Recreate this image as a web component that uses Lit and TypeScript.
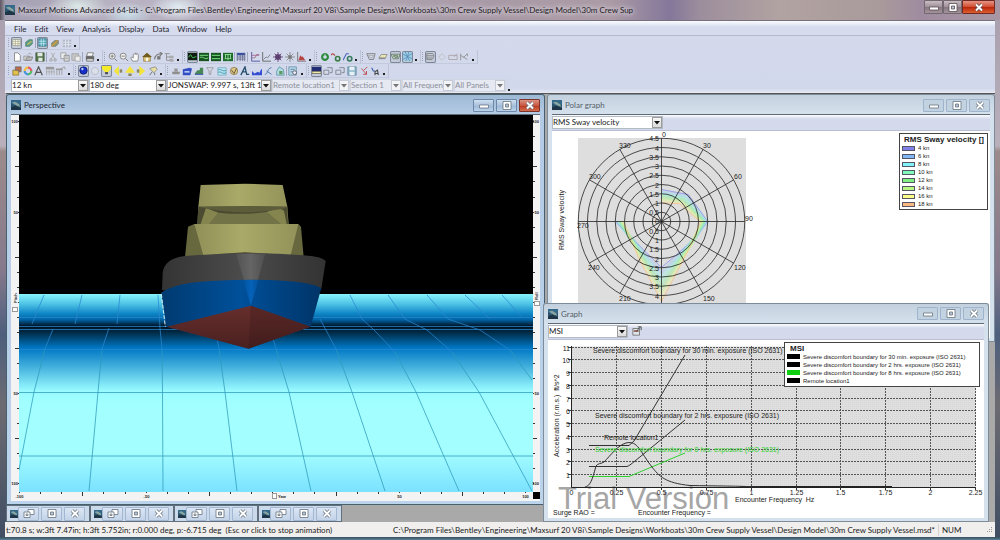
import { LitElement, html, svg, css, nothing, TemplateResult } from "lit";
import { customElement, property } from "lit/decorators.js";
import { classMap } from "lit/directives/class-map.js";
import { styleMap } from "lit/directives/style-map.js";

type Shape = ReturnType<typeof svg>;

const line = (d: string, c = "#555", w = 1): Shape =>
  svg`<path d=${d} fill="none" stroke=${c} stroke-width=${w}/>`;
const fill = (d: string, c: string, s = "none"): Shape =>
  svg`<path d=${d} fill=${c} stroke=${s} stroke-width=".8"/>`;
const ring = (x: number, y: number, r: number, c: string, s = "none", w = 1): Shape =>
  svg`<circle cx=${x} cy=${y} r=${r} fill=${c} stroke=${s} stroke-width=${w}/>`;

/* Toolbar glyphs on a 12 x 12 grid */
const ICONS: Record<string, Shape> = {
  sheet: svg`${fill("M1 2h10v8H1z", "#fffff0", "#8a8a70")}${line("M1 4.5h10M1 7.5h10M4.5 2v8M8 2v8", "#99997a", 0.8)}`,
  leaf: svg`${fill("M2 10V5l4-3h4v5L7 10z", "#5d9c83", "#4b7a6d")}${line("M4 8l5-4", "#d2c95a", 1.4)}`,
  teal: svg`${fill("M1 1h10v10H1z", "#4fa5b8", "#26667c")}${line("M1 4.3h10M1 7.6h10M4.3 1v10M7.6 1v10", "#d3f1f5", 0.9)}`,
  pencil: svg`${fill("M2 10V6l4-3h4v4L7 10z", "#8b9a72", "#6c6b66")}${line("M2 10l7-7", "#d09c3c", 1.6)}`,
  gridGrey: svg`${fill("M1 2h10v9H1z", "#b3b8c8")}${line("M1 5h10M1 8h10M4.3 2v9M7.6 2v9", "#e9ecf6", 1)}`,
  page: fill("M3 1h4l3 3v7H3z", "#fff", "#666"),
  open: svg`${fill("M1 5h7v5H1z", "#d5d5d2", "#888")}${fill("M3 10l2-4h7l-2 4z", "#bbb", "#777")}${line("M6 3l2-2 2 2", "#999")}`,
  save: svg`${fill("M1 1h10v10H1z", "#55754c", "#32482f")}${fill("M3 1h6v4H3zM4 7h5v4H4z", "#dfe8e0")}`,
  saveBlue: svg`${fill("M1 1h10v10H1z", "#8cb6cb", "#50788e")}${fill("M3 1h6v4H3zM3 7h6v4H3z", "#e8f2f6")}`,
  cut: svg`${line("M4 1l4 7M8 1L4 8", "#aaa")}${ring(3.5, 9.5, 1.5, "none", "#999")}${ring(8.5, 9.5, 1.5, "none", "#999")}`,
  copy: svg`${fill("M1 1h6v7H1z", "#ececec", "#888")}${fill("M5 4h6v7H5z", "#ddd", "#777")}${line("M6 6h4M6 8h4", "#999", 0.8)}`,
  paste: svg`${fill("M1 2h8v8H1z", "#c6c6c6", "#999")}${fill("M5 5h6v6H5z", "#eee", "#999")}`,
  print: svg`${fill("M3 1h7l-1 4H2z", "#fff", "#555")}${fill("M1 5h10v4H1z", "#666")}${fill("M2 8h8v3H2z", "#ddd", "#555")}`,
  zoomIn: svg`${ring(5, 5, 3.6, "#f3f3f3", "#777")}${line("M3 5h4M5 3v4M8 8l3 3", "#777", 1.1)}`,
  zoomOut: svg`${ring(5, 5, 3.6, "#f3f3f3", "#777")}${line("M3 5h4M8 8l3 3", "#777", 1.1)}`,
  hand: svg`${fill("M3 11L1 7l1-1 2 1V3l1-1 1 1 1-2 1 2 1-1 1 2v4L9 11z", "#f8f8f8", "#666")}`,
  home: svg`${fill("M2 6h8v5H2z", "#e7cf86", "#7d6726")}${fill("M0 6l6-5 6 5z", "#705b1c")}${fill("M5 7h2v4H5z", "#fff")}`,
  spin: svg`${line("M2 9c0-5 4-7 9-7M8 0l3 2-3 3", "#777", 1.3)}${fill("M5 5h4v4H5z", "#777")}`,
  tree: svg`${line("M1 2h6M3 2v8h4M3 6h4", "#888")}${fill("M7 5h4v2H7zM7 9h4v2H7z", "#bbb", "#999")}`,
  g1: svg`${fill("M0 1h12v10H0z", "#101c12")}${line("M1 7c2-4 3-4 4-1s3 1 6 0", "#45d65a", 1.3)}`,
  g2: svg`${fill("M0 1h12v10H0z", "#17531f")}${line("M1 4h10M1 7c3-3 6 3 10 0", "#79dd83", 1.2)}`,
  g3: svg`${fill("M0 1h12v10H0z", "#17531f")}${line("M1 4h10M1 8h10", "#79dd83", 1.2)}`,
  g4: svg`${fill("M0 1h12v10H0z", "#1d6929")}${line("M2 3h8M2 8h8M3 3v5M9 3v5M6 3v7", "#9de5a2", 1)}`,
  table: svg`${fill("M1 1h10v3H1z", "#384e9e")}${line("M1.5 1v10M5 3v8M8 3v8M10.5 1v10M1 6h10M1 8.5h10", "#62698c")}`,
  graph: svg`${line("M2 0v11h10", "#5d62a4", 1.2)}${line("M2 7h4l2-4h3M2 4h9", "#a06688", 1)}`,
  graph2: svg`${line("M2 0v11h10", "#666", 1.1)}${line("M3 9l3-3 2 1 3-4", "#777", 1)}`,
  star: svg`${ring(6, 6, 3.6, "#71477f")}${line("M6 0v12M0 6h12M2 2l8 8M10 2l-8 8", "#53406c", 1)}`,
  star2: svg`${ring(6, 6, 2, "#666")}${line("M6 0v12M0 6h12M2 2l8 8M10 2l-8 8", "#777", 0.9)}`,
  red: svg`${line("M2 0v11h10", "#666", 1)}${fill("M3 10l2-6 2 2 1-1 3 5z", "#b94444")}`,
  ringGreen: svg`${ring(6, 6, 3.5, "none", "#2d8a3f", 2.6)}${line("M6 2v3", "#b5dfb9")}`,
  ringRed: svg`${line("M0 4c2-4 4 0 5 0", "#b34d46", 1.3)}${ring(8, 8, 2.6, "none", "#3b7d49", 2)}`,
  ringBlue: svg`${line("M0 10l4-8 3 0", "#4966ba", 1.3)}${ring(8, 8, 2.6, "none", "#3b7d62", 2)}`,
  hullOut: svg`${line("M1 2h10l-2 7H4z", "#777", 1)}${line("M3 4h6l-1 3H5z", "#999", 0.8)}`,
  slab: svg`${fill("M1 7l3-4h7l-2 4z", "#e8e6b3", "#777")}${line("M1 8h8", "#777")}`,
  hullIn: svg`${fill("M0 3h12l-2 6H3z", "#cfe0cd", "#3d5544")}${line("M3 5h6v2H5z", "#3d5544", 1)}`,
  mesh: svg`${fill("M0 0h12v12H0z", "#9ccbe4")}${line("M0 3l12 6M3 0l6 12M12 2L0 10M8 0L4 12", "#467fa9", 0.8)}`,
  lines: svg`${line("M1 2h8c3 3 1 6-1 8H1zM1 5h9M1 8h8", "#777", 1)}`,
  diamond: line("M6 2l4 4-4 4-4-4z", "#bdbdbd", 1),
  rectPen: svg`${line("M1 4h10v5H1zM7 6l4-4", "#a9a0a4", 1)}`,
  net: svg`${line("M2 2v8M2 4l8 5M5 7l5-5v3", "#8c8c8c", 1)}`,
  homeBox: svg`${fill("M1 5h7v6H1z", "#e3c14c", "#7c6428")}${fill("M4 1h7v6H8V5H4z", "#be6a48", "#5b6670")}`,
  colour: svg`${line("M6 2a4 4 0 0 1 4 4", "#e35b68", 2.6)}${line("M10 6a4 4 0 0 1-4 4", "#52bd64", 2.6)}${line("M6 10a4 4 0 0 1-4-4", "#4694dc", 2.6)}${line("M2 6a4 4 0 0 1 4-4", "#f1bc3d", 2.6)}`,
  font: svg`${line("M1 11L5.5 1 10 11M3 7.5h5", "#555", 1.5)}`,
  tableG: svg`${fill("M1 1h10v3H1z", "#999")}${line("M2 4v7M5 4v7M8 4v7M11 4v7M1 7h10", "#aaa")}`,
  tableP: svg`${fill("M0 3h8v2H0z", "#999")}${line("M1 5v6M4 5v6M7 5v6M5 4l5-3 1 3", "#999")}`,
  ball: svg`${ring(6, 6, 5, "#172fc8", "#0b1763")}${ring(4.5, 4, 1.6, "#b9d2fb")}`,
  ghost: ring(6, 6, 4.3, "#dadfe9", "#b5bac6"),
  lampOn: svg`${fill("M0 0h12v4L8 8H4L0 4z", "#f4ec2a")}${fill("M4 8h4v3H4z", "#555")}`,
  lampL: svg`${fill("M7 0v12L1 6z", "#f3e43a")}${fill("M8 4h3v4H8z", "#8a8760")}`,
  lampM: svg`${fill("M6 0l6 8H0z", "#f3e43a")}${fill("M4 9h4v3H4z", "#8a8760")}`,
  lampR: svg`${fill("M4 0l7 6-7 6z", "#f3e43a")}${fill("M1 4h3v4H1z", "#8a8760")}`,
  lampQ: svg`${fill("M2 3l7-2 2 3-4 4z", "#e6dfa0", "#777")}${line("M5 7l-3 4M8 8v3", "#777", 1.2)}`,
  shipG: svg`${fill("M1 7h10l-1 3H2z", "#8f8f8f")}${fill("M4 3h4v4H4z", "#999")}`,
  shipB: svg`${fill("M1 4l8-2 3 1-2 8H1z", "#344fc2")}${fill("M3 6h6v2H3z", "#b7cbf6")}`,
  ship3: svg`${fill("M1 9l3-4h3V2h4v8H1z", "#4a8757")}${line("M1 10h10", "#3452ab", 1.2)}`,
  filter: svg`${line("M2 2h8L7 6v4H5V6z", "#999", 1)}`,
  waves: svg`${fill("M1 2h10v9H1z", "#b6e3ef", "#6ea6b7")}${line("M1 5c3-3 6 3 10 0M1 8c3-3 6 3 10 0", "#3b92ae")}`,
  shield: svg`${ring(6, 6, 4.4, "#dcc584", "#8e7e58")}${line("M3 5l3 4 3-6", "#6b603e", 1.2)}`,
  fx: svg`${line("M1 11L6 1l2 9h3M3 7h5", "#27516f", 1.6)}`,
  area: svg`${fill("M0 11V6l3 3 4-2 2 1 2-4h1v7z", "#344fd2")}`,
  curve: svg`${line("M1 10c4 0 3-8 8-8M3 6l6 4", "#547cae", 1.2)}`,
  poly: svg`${fill("M2 6l3-5 5 3 1 7H2z", "#b0dde3", "#4b859a")}${fill("M5 6h4v4H5z", "#5d9b62")}`,
  search: svg`${fill("M1 1h9v10H1z", "#b7d6ea", "#54809a")}${line("M3 4h5M3 7h3", "#54809a")}${ring(8, 8, 2.3, "#eef", "#555")}`,
  monitor: svg`${fill("M0 1h12v7H0z", "#1f2b76")}${fill("M0 7h12v3H0z", "#f0e9a4", "#444")}`,
  camera: svg`${line("M1 5h6v5H1zM5 2h6v6H8", "#818690", 1.1)}`,
  runner: svg`${line("M10 1L6 5M3 3l6 7M9 6v4H5", "#ba4c4a", 1.1)}`,
  walker: svg`${line("M2 2l2 4h2", "#3d5cae", 1.3)}${line("M6 11V7l3-2 1 6M6 9h4", "#444", 1.3)}`,
  export: svg`${fill("M1 3h8v8H1z", "#dfe3ea", "#555")}${fill("M2 5h6v2H2z", "#8b5a4a")}${line("M5 7l5-6M7 1h4v4", "#555", 1.2)}`,
};

interface Group {
  width: number;
  /* "|" is a divider, a leading "*" marks a pressed button */
  items: string;
}

const ROWS: Group[][] = [
  [{ width: 73, items: "*sheet leaf | *teal pencil gridGrey" }],
  [
    { width: 96, items: "page open save | cut copy paste | print" },
    { width: 80, items: "zoomIn zoomOut hand home spin tree" },
    { width: 132, items: "*g1 g2 g3 g4 | table | graph graph2 star star2 red" },
    { width: 46, items: "ringGreen ringRed ringBlue" },
    { width: 60, items: "hullOut slab *hullIn *mesh" },
    { width: 57, items: "*lines diamond rectPen net" },
  ],
  [
    { width: 67, items: "homeBox colour font tableG tableP" },
    { width: 92, items: "*ball ghost *lampOn lampL lampM lampR lampQ" },
    { width: 141, items: "shipG shipB ship3 filter waves shield fx area curve poly | search" },
    { width: 82, items: "*monitor camera camera saveBlue runner walker" },
  ],
];

const COMBOS = [
  { label: "Speed", value: "12 kn", width: 78, off: false },
  { label: "Heading", value: "180 deg", width: 78, off: false },
  { label: "Spectrum", value: "JONSWAP: 9.997 s, 13ft 1.483", width: 105, off: false },
  { label: "Location", value: "Remote location1", width: 78, off: true },
  { label: "Section", value: "Section 1", width: 52, off: true },
  { label: "Frequency", value: "All Frequencies", width: 52, off: true },
  { label: "Panels", value: "All Panels", width: 52, off: true },
];

const logo = svg`<rect width="12" height="12" fill="#2b5068"/><path d="M0 0h12v6L8 4 4 7 0 4z" fill="#35698a"/><path d="M1 3l4-1 5 3 1 3-4-1z" fill="#8aa7a2"/><path d="M0 9l5-2 7 3v2H0z" fill="#1d3546"/>`;

@customElement("combo-box")
export class ComboBox extends LitElement {
  @property() label = "";
  @property() value = "";
  @property({ type: Boolean }) off = false;

  static styles = css`
    :host { display: block; min-width: 0; }
    .box { display: grid; grid-template-columns: minmax(0, 1fr) 10px; height: 13px; box-sizing: border-box; border: 1px solid #b4b9c6; background: #fff; }
    .box.off { background: #e6e9f2; border-color: #d0d5e2; }
    select { grid-area: 1 / 1 / 2 / 3; width: 100%; min-width: 0; height: 11px; padding: 0 10px 0 0; margin: 0; border: 0; appearance: none; background: none; font: 8px/11px Lato, "Noto Sans", sans-serif; color: #222; overflow: hidden; border-radius: 0; }
    select:disabled { color: #8b8f9b; opacity: 1; }
    .arrow { grid-area: 1 / 2 / 2 / 3; z-index: 1; pointer-events: none; height: 11px; width: 10px; box-sizing: border-box; background: linear-gradient(#f8f8f8, #dcdcdc); border: 1px solid #9b9b9b; }
    .off .arrow { background: #f2f3f7; border-color: #c6cad5; }
    .off path { fill: #777; }
  `;

  render() {
    return html`<div class=${classMap({ box: true, off: this.off })}>
      <select aria-label=${this.label} ?disabled=${this.off}><option>${this.value}</option></select>
      <svg class="arrow" viewBox="0 0 8 9" aria-hidden="true"><path d="M1 3h6L4 6.500z" fill="#111"/></svg>
    </div>`;
  }
}

@customElement("window-buttons")
export class WindowButtons extends LitElement {
  @property() kind: "main" | "active" | "idle" | "mini" = "idle";

  static styles = css`
    :host { display: flex; flex: none; }
    .set { display: flex; gap: 2px; }
    button { width: 21px; height: 13px; padding: 0; margin: 0; display: grid; place-items: center; box-sizing: border-box; border: 1px solid #9db4cc; border-radius: 1px; background: #c3d2e0; }
    svg { display: block; width: 12px; height: 9px; }
    .active button { background: linear-gradient(#cfdff0, #a9c1dc 50%, #9bb7d6 51%, #bcd2ea); border-color: #6c87a8; }
    .active .close { background: linear-gradient(#dd9484, #c95640 50%, #b6371f 51%, #d66f50); border-color: #7c342b; }
    .main { gap: 0; }
    .main button { width: 19px; background: linear-gradient(#c9bcc2, #9f909a 50%, #85757f 51%, #a3949c); border-color: #72666f; border-radius: 0 0 1px 1px; height: 14px; }
    .main .close { width: 33px; background: linear-gradient(#e59482, #d14c30 50%, #b82409 51%, #dd5f30); border-color: #6f2a25; }
    .mini button { background: linear-gradient(#dbe6f4, #c3d3e8); border-color: #a3b7d3; height: 14px; }
  `;

  render() {
    const stroke = this.kind === "main" ? "#5a4c50" : "#66727f";
    const max = svg`<path d="M2 .5h8v8H2z" fill="#fff" stroke=${stroke} stroke-width=".8"/><path d="M4.5 3h3v3h-3z" fill="#b7c4d3" stroke=${stroke} stroke-width=".8"/>`;
    const restore = svg`<path d="M5 .5h6v5H5z" fill="#fff" stroke=${stroke} stroke-width=".8"/><path d="M1 3h6v5.500H1z" fill="#fff" stroke=${stroke} stroke-width=".8"/><path d="M3 5h2v1.500H3z" fill="none" stroke=${stroke} stroke-width=".8"/>`;
    const min = svg`<path d="M1.500 4h9v3h-9z" fill="#fff" stroke=${stroke} stroke-width=".8"/>`;
    const close = svg`<path d="M3 1.500l6 6M9 1.500l-6 6" stroke=${stroke} stroke-width="3.400"/><path d="M3 1.500l6 6M9 1.500l-6 6" stroke="#fff" stroke-width="1.900"/>`;
    const mini = this.kind === "mini";
    return html`<div class="set ${this.kind}">
      <button aria-label=${mini ? "Restore" : "Minimize"}><svg viewBox="0 0 12 9">${mini ? restore : min}</svg></button>
      <button aria-label="Maximize"><svg viewBox="0 0 12 9">${max}</svg></button>
      <button class="close" aria-label="Close"><svg viewBox="0 0 12 9">${close}</svg></button>
    </div>`;
  }
}

@customElement("tool-bars")
export class ToolBars extends LitElement {
  static styles = css`
    :host { display: block; padding-left: 2px; background: linear-gradient(#d4daec, #d2d8eb 92%, #e6eaf5); }
    .row { display: flex; height: 14px; }
    .group { display: flex; align-items: center; flex: none; box-sizing: border-box; border-right: 1px solid #bdc4d8; border-bottom: 1px solid #c4cade; }
    .grip { flex: none; width: 1px; height: 10px; margin: 0 1px; background: repeating-linear-gradient(#9aa2b8 0 1px, transparent 1px 2px); }
    .icons { flex: 1; display: flex; justify-content: space-between; align-items: center; padding-left: 1px; }
    .icons button { width: 11px; height: 12px; padding: 0; margin: 0; border: 0; border-radius: 2px; background: none; display: grid; place-items: center; }
    .icons button.on { background: #c3cad8; box-shadow: inset 0 0 0 1px #7d8798; }
    .icons svg { display: block; width: 10px; height: 10px; }
    .icons .on svg { width: 9px; height: 9px; }
    .split { width: 1px; height: 10px; background: #9fa8be; }
    .more { flex: none; width: 2px; height: 2px; margin: 7px 3px 0 2px; background: #222; }
    .combos { display: flex; align-items: center; height: 15px; padding-left: 4px; }
    .combo { flex: none; }
    .more.last { margin-top: 9px; }
  `;

  renderItem(item: string): TemplateResult {
    if (item === "|") return html`<span class="split"></span>`;
    const on = item.startsWith("*");
    const name = on ? item.slice(1) : item;
    return html`<button class=${classMap({ on })} aria-label=${name} aria-pressed=${on}>
      <svg viewBox="0 0 12 12">${ICONS[name]}</svg></button>`;
  }

  render() {
    return html`
      ${ROWS.map((row) => html`<div class="row">${row.map((g) => html`
        <div class="group" style=${styleMap({ width: `${g.width}px` })}>
          <span class="grip"></span>
          <div class="icons">${g.items.split(" ").map((i) => this.renderItem(i))}</div>
          <span class="more"></span>
        </div>`)}</div>`)}
      <div class="combos">
        ${COMBOS.map((c) => html`<combo-box class="combo" style=${styleMap({ width: `${c.width}px` })}
          .label=${c.label} .value=${c.value} .off=${c.off}></combo-box>`)}
        <span class="more last"></span>
      </div>`;
  }
}

@customElement("sea-view")
export class SeaView extends LitElement {
  static styles = css`
    :host { display: block; min-height: 0; background: #f4f4f4; }
    svg { display: block; width: 100%; height: 100%; }
    text { font: bold 4px "Liberation Sans", sans-serif; fill: #222; }
    .tick { stroke: #333; stroke-width: 1; fill: none; }
    .knob { fill: #fff; stroke: #999; }
    .mesh { fill: none; stroke: #2d9ab9; stroke-width: 1; stroke-opacity: .75; }
    .deep { fill: none; stroke: #2a87cf; stroke-width: 1; stroke-opacity: .75; }
  `;

  render() {
    const steps = Array.from({ length: 25 }, (_, k) => k);
    const len = (k: number) => (k % 6 === 0 ? 1 : k % 3 === 0 ? 4 : 2);
    const marks: [number, string, string][] = [[0, "100", "-100"], [6, "50", "-50"], [18, "50", "50"], [24, "100", "100"]];
    const vy = (k: number) => Math.round(121 + k * 15.1) + 0.5;
    const hx = (k: number) => Math.round(19 + k * 21.1) + 0.5;
    return html`<svg viewBox="11 115 529 385" preserveAspectRatio="xMidYMin meet" role="img" aria-label="Vessel in waves, perspective view">
      <defs>
        <linearGradient id="sea" x1="0" y1="294" x2="0" y2="491" gradientUnits="userSpaceOnUse">
          <stop offset="0" stop-color="#87f3fb"/><stop offset=".05" stop-color="#4fc3e6"/>
          <stop offset=".1" stop-color="#0e86c6"/><stop offset=".13" stop-color="#0064a6"/>
          <stop offset=".165" stop-color="#00101f"/><stop offset=".2" stop-color="#00304e"/>
          <stop offset=".275" stop-color="#0078c6"/><stop offset=".33" stop-color="#2798d2"/>
          <stop offset=".49" stop-color="#98faff"/><stop offset=".56" stop-color="#a2ffff"/>
          <stop offset=".8" stop-color="#a4feff"/><stop offset="1" stop-color="#7be2ff"/>
        </linearGradient>
        <linearGradient id="cabin" x1="0" x2="1" y1="0" y2="0">
          <stop offset="0" stop-color="#8f8f58"/><stop offset=".45" stop-color="#a9a968"/><stop offset="1" stop-color="#93935a"/>
        </linearGradient>
        <linearGradient id="deck" x1="0" x2="1" y1="0" y2="0">
          <stop offset="0" stop-color="#343434"/><stop offset=".5" stop-color="#4c4c4c"/><stop offset="1" stop-color="#333"/>
        </linearGradient>
        <linearGradient id="hull" x1="0" x2="1" y1="0" y2="0">
          <stop offset="0" stop-color="#003a70"/><stop offset=".5" stop-color="#00509a"/><stop offset="1" stop-color="#003467"/>
        </linearGradient>
        <linearGradient id="prow" x1="0" x2="1" y1="0" y2="0">
          <stop offset="0" stop-color="#666" stop-opacity=".3"/><stop offset=".5" stop-color="#6c6c6c" stop-opacity=".8"/><stop offset="1" stop-color="#666" stop-opacity=".3"/>
        </linearGradient>
        <linearGradient id="prowBlue" x1="0" x2="1" y1="0" y2="0">
          <stop offset="0" stop-color="#0560b4" stop-opacity=".3"/><stop offset=".5" stop-color="#0563ba"/><stop offset="1" stop-color="#0560b4" stop-opacity=".3"/>
        </linearGradient>
        <linearGradient id="keel" x1="0" x2="0" y1="0" y2="1">
          <stop offset="0" stop-color="#662e2c"/><stop offset="1" stop-color="#4a2120"/>
        </linearGradient>
      </defs>
      <rect x="19" y="115" width="514" height="180" fill="#000"/>
      <rect x="19" y="294" width="514" height="198" fill="url(#sea)"/>
      <path class="mesh" d="M19 392.500h514M19 456h514M45 349L34 392 19 470M102 349L98 392 89 491M162 349L162.500 392 163 491M219 349L225 392 237 491M276 349L289 392 311 491M336 349L352 392 385 491M395 352L416 392 459 491M452 352L479 392 532 491M510 350L532 380"/>
      <path class="deep" d="M19 317.500h514M19 326.500h514M19 329.500h514M19 349.500h514M44 295L32 324M82 295L75 324M120 295L117 324M158 295L160 328 162 349M350 295L362 319 374 330 395 352M388 295L405 319 427 330 452 352M427 295L448 319 480 330 510 350M465 295L490 319M502 295L521 316M320 319L336 349M53 329L45 349M109 328L102 349M217 338L219 349M273 338L276 349"/>
      <g transform="translate(150 170) scale(.33333)">
        <path d="M152 45L285 41 398 45 412 110 416 165H142L145 110z" fill="url(#cabin)"/>
        <path d="M145 110Q280 108 412 110L414 163H142z" fill="#4b4b31"/>
        <path d="M178 162L205 128Q280 136 350 126L392 162z" fill="#737348"/>
        <path d="M168 114L152 162H178L205 128zM385 113L402 122 410 162H392L350 126z" fill="#85854f"/>
        <path d="M145 110Q280 108 412 110L400 116Q280 138 166 115z" fill="#5d5d3b"/>
        <path d="M114 170L133 162H445L453 170 461 262H105z" fill="#68683f"/>
        <path d="M133 162H445L422 256H160z" fill="url(#cabin)"/>
        <path d="M205 252L285 247 370 252z" fill="#454530"/>
        <path d="M36 360L38 310Q42 265 105 258 285 243 460 256 515 260 527 273L514 356Q300 420 36 360z" fill="url(#deck)"/>
        <path d="M258 251H346L322 335H284z" fill="url(#prow)"/>
        <path d="M33 368Q80 335 200 332 300 326 400 332 480 336 514 354L482 470 296 536 50 470z" fill="url(#hull)"/>
        <path d="M280 330H326L302 407z" fill="url(#prowBlue)"/>
        <path d="M50 470L302 407 482 470 296 536z" fill="url(#keel)"/>
        <path d="M302 407L482 470 296 536z" fill="#2a1010" opacity=".2"/>
        <path d="M34 372L46 470" stroke="#d5eef4" stroke-width="3" stroke-dasharray="12 4"/>
      </g>
      <rect x="11" y="115" width="8" height="385" fill="#f3f3f3"/>
      <rect x="533" y="115" width="8" height="385" fill="#f3f3f3"/>
      <rect x="11" y="492" width="529" height="8" fill="#f3f3f3"/>
      <rect x="533" y="492" width="7" height="7" fill="#000"/>
      <path class="tick" d=${steps.map((k) => `M19 ${vy(k)}h${-len(k)}M533 ${vy(k)}h${len(k)}M${hx(k)} 492v${len(k)}`).join("")}/>
      ${marks.map(([k, v, h]) => svg`
        <text x="18" y=${vy(k) + 1} text-anchor="end">${v}</text>
        <text x="539" y=${vy(k) + 1} text-anchor="end">${v}</text>
        <text x=${hx(k)} y="498" text-anchor="middle">${h}</text>`)}
      <text transform="translate(17 303) rotate(-90)">Pitch</text>
      <text transform="translate(538 300) rotate(-90)">Roll</text>
      <rect class="knob" x="12.500" y="307.500" width="5" height="4"/>
      <rect class="knob" x="534.500" y="301.500" width="5" height="4"/>
      <rect class="knob" x="272.500" y="493.500" width="4" height="5"/>
      <text x="278" y="498">Yaw</text>
    </svg>`;
  }
}

const SPEEDS: [string, string][] = [
  ["4 kn", "#8080e8"], ["6 kn", "#80b8f4"], ["8 kn", "#80f4f8"], ["10 kn", "#80f8b8"],
  ["12 kn", "#80f080"], ["14 kn", "#b8f880"], ["16 kn", "#fcfc88"], ["18 kn", "#f8b880"],
];

@customElement("polar-chart")
export class PolarChart extends LitElement {
  static styles = css`
    :host { display: flex; justify-content: space-between; align-items: flex-start; min-height: 0; background: #fff; overflow: hidden; }
    .plot { flex: none; display: block; width: 220px; height: 190px; }
    text { font: 7px "Liberation Sans", sans-serif; fill: #222; }
    .grid { fill: none; stroke: #222; stroke-width: .8; }
    .legend { margin: 2px 2px 0 0; padding: 1px 5px 1px 2px; width: 80px; border: 1px solid #444; font: 6px/8px "Liberation Sans", sans-serif; color: #222; background: #fff; }
    h3 { margin: 0 0 0 2px; font-size: 8px; line-height: 9px; white-space: nowrap; }
    ul { margin: 0; padding: 0; list-style: none; }
    li { display: flex; align-items: center; gap: 3px; height: 8px; }
    .chip { width: 13px; height: 5px; box-sizing: border-box; border: 1px solid #556; }
  `;

  render() {
    const cx = 661.5, cy = 221.5, step = 9.25;
    const rad = (a: number) => ((a - 90) * Math.PI) / 180;
    const at = (a: number, r: number) => `${(cx + r * Math.cos(rad(a))).toFixed(1)} ${(cy + r * Math.sin(rad(a))).toFixed(1)}`;
    const first = [[0, 32], [45, 38], [90, 46], [120, 37], [180, 46], [210, 34], [270, 46]];
    const last = [[0, 19], [45, 25], [90, 39], [120, 37], [180, 80], [210, 44], [270, 38]];
    const angles = [0, 30, 60, 90, 120, 150, 180, 210, 240, 270, 300, 330];
    const names: [string, number, number][] = [
      ["0", 662, 137], ["30", 703, 148], ["60", 734, 179], ["90", 745, 221], ["120", 734, 270], ["150", 703, 301],
      ["210", 619, 301], ["240", 588, 270], ["270", 577, 228], ["300", 589, 179], ["330", 619, 148],
    ];
    const rings = [1, 2, 3, 4, 5, 6, 7, 8, 9];
    return html`
      <svg class="plot" viewBox="552 131 220 190" role="img" aria-label="Polar plot of RMS Sway velocity">
        <rect x="578" y="138" width="168" height="170" fill="#dedede"/>
        ${SPEEDS.map(([, c], i) => {
          const pts = first.map(([a, r], k) => at(a, r + ((last[k][1] - r) * i) / 7));
          return svg`<path d=${"M" + pts.join("L")} fill="none" stroke=${c} stroke-width=${i && i < 7 ? 3.5 : 1} stroke-opacity=${i && i < 7 ? 0.25 : 0.7}/>`;
        })}
        ${rings.map((r) => svg`<circle class="grid" cx=${cx} cy=${cy} r=${r * step}/>`)}
        <path class="grid" d=${angles.map((a) => `M${cx} ${cy}L${at(a, 83.3)}`).join("")}/>
        ${rings.map((r) => svg`<text x="659" y=${cy + 3 - r * step} text-anchor="end">${r / 2}</text>
          ${r < 9 ? svg`<text x="659" y=${cy + 3 + r * step} text-anchor="end">${r / 2}</text>` : nothing}`)}
        <text x="659" y="224" text-anchor="end">0</text>
        ${names.map(([t, x, y]) => svg`<text x=${x} y=${y}>${t}</text>`)}
        <text transform="translate(564 250) rotate(-90)">RMS Sway velocity</text>
      </svg>
      <div class="legend">
        <h3>RMS Sway velocity []</h3>
        <ul>${SPEEDS.map(([t, c]) => html`<li><span class="chip" style=${styleMap({ background: c })}></span>${t}</li>`)}</ul>
      </div>`;
  }
}

@customElement("msi-chart")
export class MsiChart extends LitElement {
  static styles = css`
    :host { display: grid; align-items: start; min-height: 0; background: #fff; overflow: hidden; }
    .plot { grid-area: 1 / 1; display: block; width: 100%; height: 180px; }
    text { font: 7px "Liberation Sans", sans-serif; fill: #222; }
    .green { fill: #2fd12f; }
    .mark { font-size: 31px; fill: #a6a6a6; }
    .dash { fill: none; stroke: #555; stroke-width: 1; stroke-dasharray: 2 1; }
    .curve { fill: none; stroke: #333; stroke-width: 1; }
    .curve.lime { stroke: #2fd12f; }
    .legend { grid-area: 1 / 1; justify-self: end; z-index: 1; margin: 2px 4px 0 0; padding: 1px 4px 1px 2px; box-sizing: border-box; width: 196px; border: 1px solid #444; font: 6px/8px "Liberation Sans", sans-serif; color: #222; background: #fff; white-space: nowrap; }
    h3 { margin: 0 0 0 3px; font-size: 8px; line-height: 9px; }
    ul { margin: 0; padding: 0; list-style: none; }
    li { display: flex; align-items: center; gap: 3px; height: 8px; }
    .chip { width: 13px; height: 5px; background: #000; }
    .chip.lime { background: #10cf10; }
  `;

  render() {
    const x = (k: number) => Math.round(572 + k * 44.9) - 0.5;
    const y = (v: number) => Math.round(487 - v * 12.77) + 0.5;
    const cols = [1, 2, 3, 4, 5, 6, 7, 8, 9];
    const vals = [1, 2, 3, 4, 5, 6, 7, 8, 9, 10, 11];
    return html`
      <svg class="plot" viewBox="548 340 435 180" preserveAspectRatio="xMinYMin meet" role="img" aria-label="MSI graph">
        <defs>
          <pattern id="weave" width="2" height="2" patternUnits="userSpaceOnUse">
            <rect width="2" height="2" fill="#dfdfdf"/><rect width="1" height="1" fill="#d6d6d6"/>
          </pattern>
        </defs>
        <rect x="571.500" y="346.500" width="404" height="141" fill="url(#weave)"/>
        <text class="mark" x="558" y="509">Trial Version</text>
        <path class="dash" d=${cols.map((k) => `M${x(k)} 346V487`).join("") + vals.map((v) => `M572 ${y(v)}H976`).join("")}/>
        <path d="M571.500 346V487.500H976" fill="none" stroke="#222"/>
        <path d="M740 486.500H892" fill="none" stroke="#222"/>
        <path d=${vals.map((v) => `M568 ${y(v)}h4`).join("") + cols.map((k) => `M${x(k)} 487v3`).join("")} stroke="#333" fill="none"/>
        <path class="curve" d="M589 445.500H629L634 441 685 355"/>
        <path class="curve" d="M589 466.500H627Q629 466 635 461L685 420"/>
        <path class="curve lime" d="M589 476.500H629L685 453"/>
        <path class="curve" d="M585 487C590 486 592 481 596 466 598 463 601 464 604 462 610 456 618 445 626 443 638 440 640 452 652 467 659 476 665 483 690 485.500 715 486 740 486 760 487"/>
        ${vals.map((v) => svg`<text x="570" y=${y(v) + 3} text-anchor="end">${v}</text>`)}
        ${[0, ...cols].map((k) => svg`<text x=${x(k)} y="495" text-anchor="middle">${k / 4}</text>`)}
        <text x="593" y="353">Severe discomfort boundary for 30 min. exposure (ISO 2631)</text>
        <text x="595" y="418">Severe discomfort boundary for 2 hrs. exposure (ISO 2631)</text>
        <text class="green" x="595" y="452">Severe discomfort boundary for 8 hrs. exposure (ISO 2631)</text>
        <text x="604" y="440">Remote location1</text>
        <text x="735" y="502">Encounter Frequency&#160; Hz</text>
        <text x="553" y="515">Surge RAO =</text>
        <text x="638" y="515">Encounter Frequency =</text>
        <text transform="translate(559 457) rotate(-90)">Acceleration (r.m.s.)&#160; ft/s^2</text>
      </svg>
      <div class="legend">
        <h3>MSI</h3>
        <ul>
          <li><span class="chip"></span>Severe discomfort boundary for 30 min. exposure (ISO 2631)</li>
          <li><span class="chip"></span>Severe discomfort boundary for 2 hrs. exposure (ISO 2631)</li>
          <li><span class="chip lime"></span>Severe discomfort boundary for 8 hrs. exposure (ISO 2631)</li>
          <li><span class="chip"></span>Remote location1</li>
        </ul>
      </div>`;
  }
}

@customElement("mdi-window")
export class MdiWindow extends LitElement {
  @property() heading = "";
  @property({ type: Boolean, reflect: true }) active = false;

  static styles = css`
    :host { display: flex; flex-direction: column; box-sizing: border-box; padding: 0 5px 4px; border-radius: 3px 3px 0 0; background: linear-gradient(#c2cfdc, #d5e2ee 20px); box-shadow: inset 0 0 0 1px #7e8b98; }
    :host([active]) { background: linear-gradient(#9db8d4, #b4cbe5 20px, #bcd3ec); box-shadow: inset 0 0 0 1px #46606f; }
    header { display: flex; align-items: center; gap: 3px; height: 20px; flex: none; font: 8px/12px Lato, "Noto Sans", sans-serif; color: #555f68; padding-top: 2px; box-sizing: border-box; }
    :host([active]) header { color: #1c2530; }
    header svg { width: 10px; height: 10px; display: block; }
    h2 { flex: 1; margin: 0; font: inherit; }
    .body { flex: 1; min-height: 0; display: flex; flex-direction: column; border-top: 1px solid #5e6a74; }
    ::slotted(.grow) { flex: 1; }
  `;

  render() {
    return html`<header>
        <svg viewBox="0 0 12 12" aria-hidden="true">${logo}</svg><h2>${this.heading}</h2>
        <window-buttons .kind=${this.active ? "active" : "idle"}></window-buttons>
      </header>
      <div class="body"><slot></slot></div>`;
  }
}

@customElement("app-root")
export class AppRoot extends LitElement {
  static styles = css`
    :host { display: flex; flex-direction: column; box-sizing: border-box; height: 100vh; padding: 0 5px 3px; color: #1b1b22; font: 8px/12px Lato, "Noto Sans", sans-serif;
      background:
        linear-gradient(#36505f, #5b8196) 0 100% / 100% 3px no-repeat,
        linear-gradient(90deg, #5c5560, #8f8b98 4px, transparent 5px) 0 0 / 100% 20px no-repeat,
        radial-gradient(30px 14px at 78px 6px, #dbe9e6, transparent) no-repeat,
        radial-gradient(24px 12px at 128px 14px, #c5dde6, transparent) no-repeat,
        radial-gradient(28px 14px at 178px 7px, #e1edf2, transparent) no-repeat,
        linear-gradient(90deg, #a29db0, #b9b3c4 12%, #b3a9b8 30%, #a89aa6 48%, #ab9ba6 61%, #84779a 67%, #9d8e9d 70%, #b1a3a1 78%, #a99a9b 88%, #a08ca0 92%, #a897a3) 0 0 / 100% 20px no-repeat,
        linear-gradient(#a79fad, #b9b0bc 27%, #9c8b8b 28%, #85798c 50%, #4d5f7d 62%, #6d6b72 75%, #3f4d63); }
    .title { display: flex; align-items: flex-start; height: 20px; flex: none; }
    .title svg { width: 10px; height: 10px; margin: 5px 3px 0 0; flex: none; }
    h1 { flex: 1; min-width: 0; margin: 4px 0 0; font: inherit; white-space: nowrap; text-shadow: 0 0 4px #ece6f0, 0 0 6px #ece6f0; }
    nav { display: flex; gap: 8px; height: 16px; flex: none; box-sizing: border-box; padding: 2px 0 0 9px; background: linear-gradient(#fbfcff, #d6dcee 6px); border-top: 1px solid #75707e; border-bottom: 1px solid #b4bad0; }
    nav a { color: #26262e; text-decoration: none; }
    .desk { flex: 1; min-height: 0; position: relative; margin-left: 1px; background: #a9a9a9; border-top: 1px solid #555; overflow: hidden; }
    .persp, .polar, .graph { position: absolute; }
    .persp { left: 0; top: 0; width: 54.500%; height: 96%; }
    .polar { left: 54.700%; right: 0; top: 0; height: 58%; }
    .graph { left: 54.300%; right: 6px; top: 48.800%; bottom: 0; }
    .strip { display: flex; align-items: center; gap: 4px; height: 16px; flex: none; background: linear-gradient(#fdfdff, #d4daec 4px); border-bottom: 1px solid #b9c0d6; box-sizing: border-box; }
    .strip svg { width: 10px; height: 10px; display: block; }
    .strip button { padding: 0; border: 0; background: none; height: 10px; display: block; }
    .wide { width: 111px; }
    .slim { width: 80px; }
    .tray { position: absolute; left: 0; bottom: 0; display: flex; }
    .mini { display: flex; align-items: center; justify-content: space-between; width: 84px; height: 17px; box-sizing: border-box; padding: 0 4px 0 3px; background: #cbdaeb; border: 1px solid #62707d; }
    .mini svg { width: 10px; height: 10px; }
    footer { display: flex; align-items: center; justify-content: space-between; height: 15px; flex: none; padding: 0 2px 0 1px; background: #f0efee; white-space: nowrap; }
    .right { display: flex; align-items: center; gap: 3px; }
    .num { width: 44px; box-sizing: border-box; border-left: 1px solid #d4d2d0; padding-left: 3px; }
    footer svg { width: 8px; height: 8px; }
  `;

  render() {
    const menu = ["File", "Edit", "View", "Analysis", "Display", "Data", "Window", "Help"];
    const dir = "C:\\Program Files\\Bentley\\Engineering\\Maxsurf 20 V8i\\Sample Designs\\Workboats\\30m Crew Supply Vessel\\Design Model\\30m Crew Sup";
    const icon = html`<svg viewBox="0 0 12 12" aria-hidden="true">${logo}</svg>`;
    return html`
      <div class="title">
        ${icon}
        <h1>Maxsurf Motions Advanced 64-bit - ${dir}</h1>
        <window-buttons kind="main"></window-buttons>
      </div>
      <nav>${menu.map((m) => html`<a href="#">${m}</a>`)}</nav>
      <tool-bars></tool-bars>
      <div class="desk">
        <div class="tray">${[1, 2, 3, 4].map(() => html`<div class="mini">${icon}<window-buttons kind="mini"></window-buttons></div>`)}</div>
        <mdi-window class="persp" heading="Perspective" active>
          <sea-view class="grow"></sea-view>
        </mdi-window>
        <mdi-window class="polar" heading="Polar graph">
          <div class="strip"><combo-box class="wide" label="Quantity" value="RMS Sway velocity"></combo-box></div>
          <polar-chart class="grow"></polar-chart>
        </mdi-window>
        <mdi-window class="graph" heading="Graph">
          <div class="strip"><combo-box class="slim" label="Graph type" value="MSI"></combo-box>
            <button aria-label="Copy graph"><svg viewBox="0 0 12 12">${ICONS.export}</svg></button>
          </div>
          <msi-chart class="grow"></msi-chart>
        </mdi-window>
      </div>
      <footer>
        <span>t:70.8 s; w:3ft 7.47in; h:3ft 5.752in; r:0.000 deg, p:-6.715 deg&nbsp; (Esc or click to stop animation)</span>
        <div class="right">
          <span>${dir}ply Vessel.msd*</span>
          <span class="num">NUM</span>
          <svg viewBox="0 0 8 8" aria-hidden="true"><path d="M6 1h1v1H6zM4 3h1v1H4zM6 3h1v1H6zM2 5h1v1H2zM4 5h1v1H4zM6 5h1v1H6z" fill="#999"/></svg>
        </div>
      </footer>`;
  }
}
